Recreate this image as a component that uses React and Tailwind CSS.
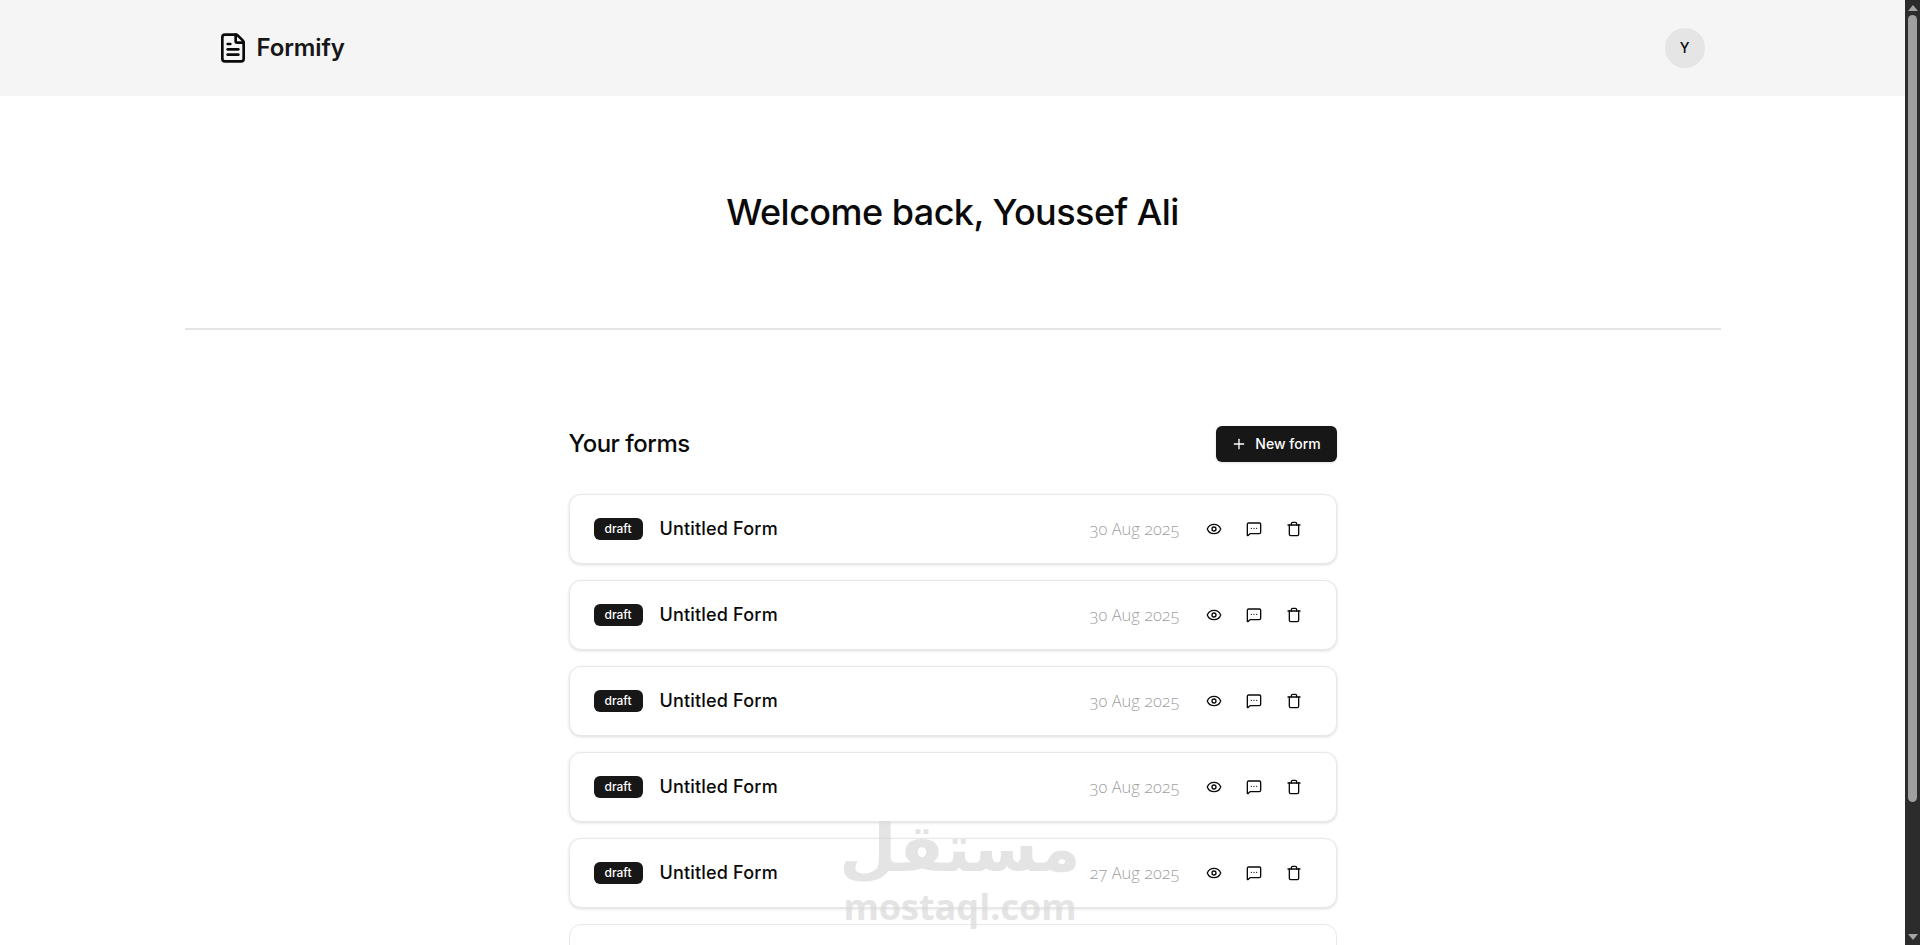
import { Eye, FileText, MessageSquareMore, Plus, Trash } from "lucide-react";

const forms = [
  { title: "Untitled Form", date: "30 Aug 2025" },
  { title: "Untitled Form", date: "30 Aug 2025" },
  { title: "Untitled Form", date: "30 Aug 2025" },
  { title: "Untitled Form", date: "30 Aug 2025" },
  { title: "Untitled Form", date: "27 Aug 2025" },
];

function FormRow({ title, date }) {
  return (
    <div className="flex h-[70px] items-center justify-between rounded-xl border border-[#e8e8e8] bg-white pl-6 pr-[22px] shadow-[0_1px_3px_rgba(0,0,0,0.14)]">
      <div className="flex items-center gap-[17px]">
        <span className="flex h-[22px] w-[49px] items-center justify-center rounded-md bg-[#171717] text-xs font-medium text-white">
          draft
        </span>
        <span className="text-lg font-medium tracking-[0.01em] text-[#0a0a0a]">{title}</span>
      </div>
      <div className="flex items-center">
        <span className="mr-[14px] font-['Open_Sans',sans-serif] text-[16.5px] font-light text-[#a1a1a1] oldstyle-nums">{date}</span>
        <button className="flex h-10 w-10 items-center justify-center text-[#0a0a0a]">
          <Eye size={16} />
        </button>
        <button className="flex h-10 w-10 items-center justify-center text-[#0a0a0a]">
          <MessageSquareMore size={16} />
        </button>
        <button className="flex h-10 w-10 items-center justify-center text-[#0a0a0a]">
          <Trash size={16} />
        </button>
      </div>
    </div>
  );
}

export default function App() {
  return (
    <div className="flex h-screen overflow-hidden bg-white font-['Inter','Noto_Sans',sans-serif] text-[#0a0a0a]">
      <div className="relative min-w-0 flex-1 overflow-hidden">
        <header className="h-24 bg-[#f5f5f5]">
          <div className="mx-auto flex h-full max-w-[1536px] items-center justify-between pl-8 pr-4">
            <div className="flex items-center gap-2">
              <FileText size={32} />
              <span className="text-2xl font-semibold tracking-[-0.005em] text-[#171717]">Formify</span>
            </div>
            <div className="flex h-10 w-10 items-center justify-center rounded-full bg-[#e5e5e5] text-sm font-medium">
              Y
            </div>
          </div>
        </header>

        <main className="mx-auto max-w-[1536px]">
          <section className="flex h-[234px] items-center justify-center border-b-2 border-[#e5e5e5]">
            <h1 className="text-4xl font-medium tracking-[-0.015em]">Welcome back, Youssef Ali</h1>
          </section>

          <section className="mx-auto mt-24 max-w-3xl">
            <div className="mb-8 flex items-center justify-between">
              <h2 className="text-2xl font-medium tracking-[-0.02em]">Your forms</h2>
              <button className="flex h-9 w-[121px] items-center justify-center gap-2 rounded-md bg-[#171717] text-sm font-medium text-white shadow-sm">
                <Plus size={16} />
                New form
              </button>
            </div>
            <div className="flex flex-col gap-4">
              {forms.map((form, i) => (
                <FormRow key={i} title={form.title} date={form.date} />
              ))}
              <div className="h-[70px] rounded-xl border border-[#e8e8e8] bg-white" />
            </div>
          </section>
        </main>

        {/* watermark */}
        <div className="pointer-events-none absolute left-[845px] top-[806px] flex w-[230px] flex-col items-center text-[#d9d9d9] opacity-70">
          <span dir="rtl" className="font-['DejaVu_Sans',sans-serif] text-[66px] font-bold leading-[86px]">
            مستقل
          </span>
          <span className="font-['Open_Sans',sans-serif] text-[36px] font-bold leading-[30px]">mostaql.com</span>
        </div>
      </div>

      {/* scrollbar */}
      <div className="flex w-[15px] shrink-0 flex-col items-center bg-[#2c2c2c] py-[5px]">
        <div className="h-0 w-0 border-x-[5px] border-b-[6px] border-x-transparent border-b-[#a3a3a3]" />
        <div className="mt-[4px] h-[787px] w-[9px] rounded-full bg-[#9f9f9f]" />
        <div className="mt-auto h-0 w-0 border-x-[5px] border-t-[6px] border-x-transparent border-t-[#a3a3a3]" />
      </div>
    </div>
  );
}
